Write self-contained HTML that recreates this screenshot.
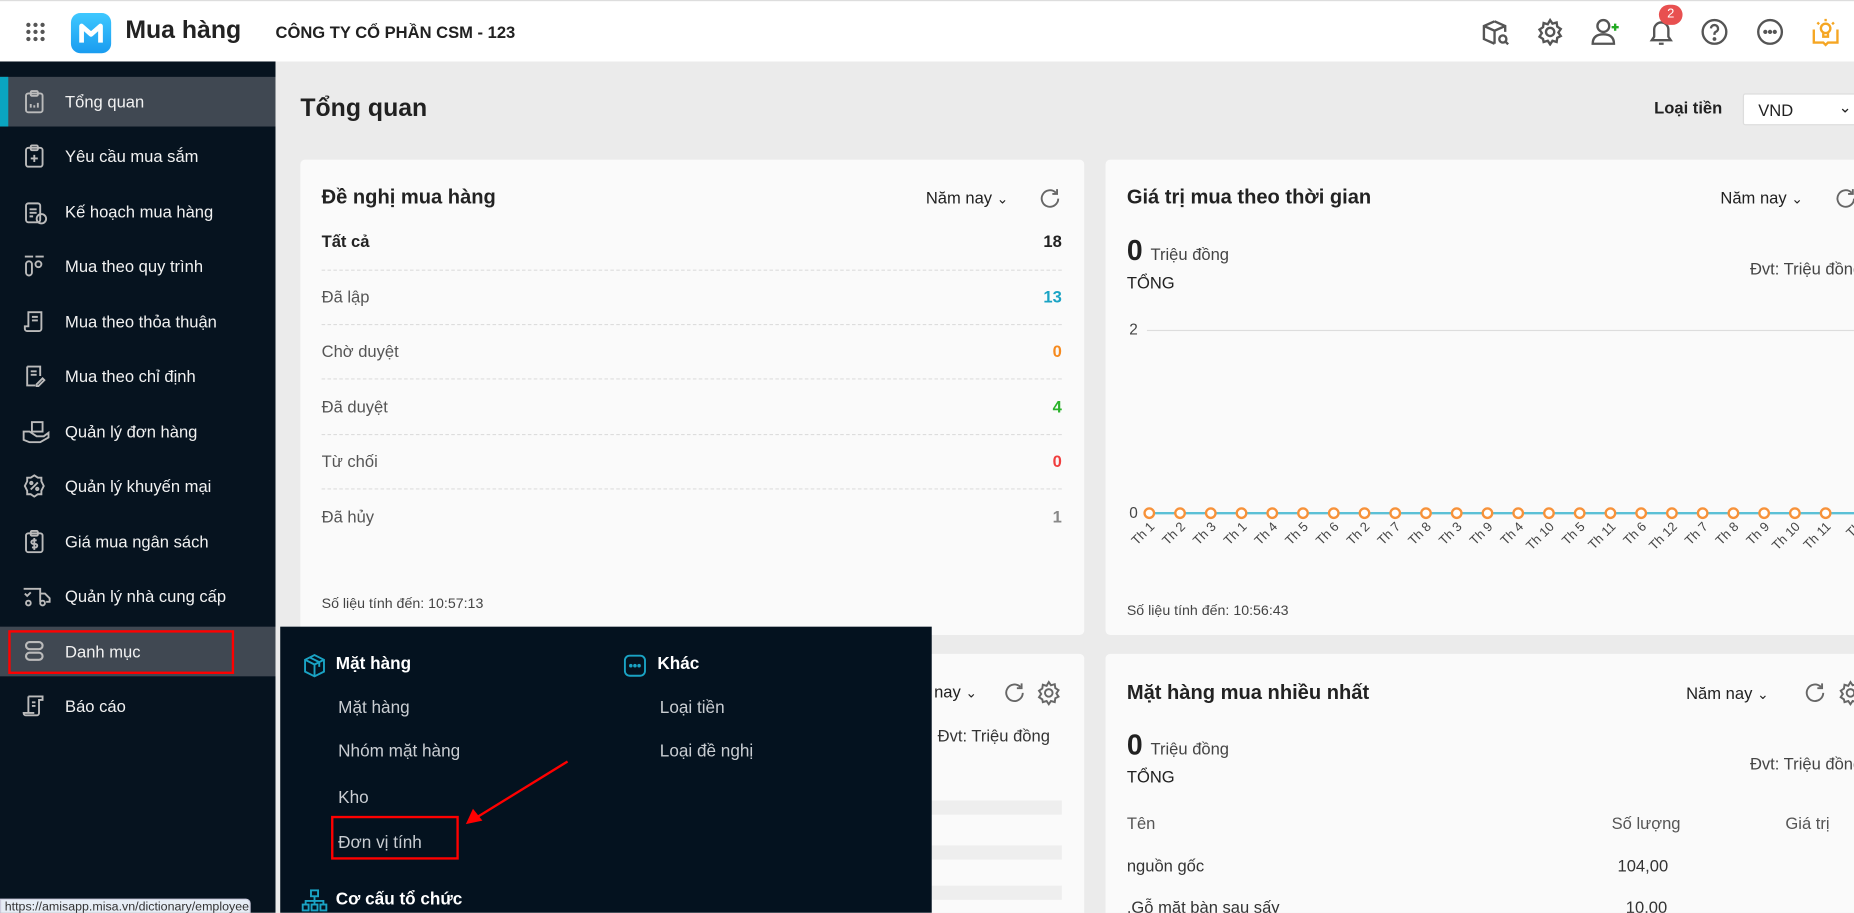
<!DOCTYPE html>
<html><head><meta charset="utf-8">
<style>
*{box-sizing:border-box;margin:0;padding:0}
html,body{width:1854px;height:913px;overflow:hidden;background:#ebebeb}
#w{position:absolute;left:0;top:0;width:1568px;height:772px;transform:scale(1.18240);transform-origin:0 0;font-family:"Liberation Sans",sans-serif;color:#212121;overflow:hidden;background:#ebebeb}
.a{position:absolute;white-space:nowrap}
.hdr{left:0;top:0;width:1568px;height:52px;background:#fff;border-top:1px solid #ddd}
.sb{left:0;top:52px;width:233px;height:720px;background:#06131f}
.si{position:absolute;left:0;width:233px;height:42px;color:#f2f2f2;font-size:14px;line-height:42px}
.si span{position:absolute;left:55px}
.si svg{position:absolute;left:19px;top:11px}
.card{background:#fafafa;border-radius:4px}
.row{position:absolute;left:272px;width:626px;font-size:14px;color:#555}
.row b{position:absolute;right:0;font-weight:bold}
.dash{position:absolute;left:272px;width:626px;border-top:1px dashed #ddd}
.dd{left:237px;top:530px;width:551px;height:242px;background:#04121f}
.mi{position:absolute;color:#c9cdd2;font-size:14.5px}
.mh{position:absolute;color:#fff;font-size:14.5px;font-weight:bold}
.ttl{font-size:17px;font-weight:bold;color:#222}
</style></head><body><div id="w">
<div class="a hdr"></div>
<svg class="a" style="left:21px;top:18px" width="18" height="18" viewBox="0 0 18 18" fill="#555"><circle cx="3" cy="3" r="1.8"/><circle cx="9" cy="3" r="1.8"/><circle cx="15" cy="3" r="1.8"/><circle cx="3" cy="9" r="1.8"/><circle cx="9" cy="9" r="1.8"/><circle cx="15" cy="9" r="1.8"/><circle cx="3" cy="15" r="1.8"/><circle cx="9" cy="15" r="1.8"/><circle cx="15" cy="15" r="1.8"/></svg>
<div class="a" style="left:60px;top:11px;width:34px;height:34px;border-radius:8px;background:linear-gradient(#3ec8ff,#1a9cf0)"></div>
<svg class="a" style="left:64px;top:17px" width="26" height="22" viewBox="0 0 26 22"><path d="M5 19V5l8 7 8-7v14" stroke="#fff" stroke-width="4" fill="none" stroke-linejoin="round"/></svg>
<div class="a" style="left:106px;top:14px;font-size:21px;font-weight:bold;color:#222">Mua hàng</div>
<div class="a" style="left:233px;top:19px;font-size:14px;font-weight:bold">CÔNG TY CỔ PHẦN CSM - 123</div>
<svg class="a" style="left:1252px;top:15px" width="26" height="26" viewBox="0 0 26 26" fill="none" stroke="#555" stroke-width="2"><path d="M12 3l9 4v5M12 3L3 7v11l9 4M3 7l9 4 9-4M12 11v11"/><circle cx="19" cy="18" r="3"/><path d="M21 20l2.5 2.5"/></svg>
<svg class="a" style="left:1299px;top:15px" width="24" height="24" viewBox="0 0 24 24" fill="none" stroke="#555" stroke-width="2"><circle cx="12" cy="12" r="3.5"/><path d="M12 2l2 3 3.5-1 .5 3.5 3 2-2 3 2 3-3 1.5-.5 3.5-3.5-1-2 3-2-3-3.5 1L6 18l-3-2 2-3-2-3 3-2 .5-3.5 3.5 1z"/></svg>
<svg class="a" style="left:1344px;top:14px" width="28" height="26" viewBox="0 0 28 26" fill="none" stroke="#555" stroke-width="2"><circle cx="12" cy="8" r="5"/><path d="M3 23c0-6 4-8 9-8s9 2 9 8z"/><path d="M22 6v6M19 9h6" stroke="#2a2"/></svg>
<svg class="a" style="left:1393px;top:15px" width="24" height="26" viewBox="0 0 24 26" fill="none" stroke="#555" stroke-width="2"><path d="M4 19h16l-2-3v-6a6 6 0 0 0-12 0v6z"/><path d="M10 22h4"/></svg>
<div class="a" style="left:1403px;top:4px;width:20px;height:17px;border-radius:9px;background:#e85050;color:#fff;font-size:11px;text-align:center;line-height:17px">2</div>
<svg class="a" style="left:1438px;top:15px" width="24" height="24" viewBox="0 0 24 24" fill="none" stroke="#555" stroke-width="2"><circle cx="12" cy="12" r="10"/><path d="M9 9a3 3 0 1 1 4 3c-1 .5-1 1-1 2.5"/><circle cx="12" cy="18" r=".6" fill="#555"/></svg>
<svg class="a" style="left:1485px;top:15px" width="24" height="24" viewBox="0 0 24 24" fill="none" stroke="#555" stroke-width="2"><circle cx="12" cy="12" r="10"/><circle cx="8" cy="12" r=".8" fill="#555"/><circle cx="12" cy="12" r=".8" fill="#555"/><circle cx="16" cy="12" r=".8" fill="#555"/></svg>
<svg class="a" style="left:1531px;top:13px" width="26" height="28" viewBox="0 0 26 28" fill="none" stroke="#f5a623" stroke-width="2"><circle cx="13" cy="11" r="4"/><path d="M11 15v3h4v-3M13 3v2M6 6l1.5 1.5M20 6l-1.5 1.5M3 12v11h8l2 2 2-2h8V12"/></svg>
<div class="a sb"></div>
<div class="si" style="top:65px;background:#404852"><div style="position:absolute;left:0;top:0;width:7px;height:42px;background:#0aa5c0"></div><svg width="20" height="20" viewBox="0 0 20 20" fill="none" stroke="#bbb" stroke-width="1.6"><rect x="3" y="3" width="14" height="16" rx="2"/><rect x="7" y="1" width="6" height="4" rx="1"/><path d="M7 15v-3M10 15v-2M13 15v-4"/></svg><span>Tổng quan</span></div>
<div class="si" style="top:111px"><svg width="20" height="20" viewBox="0 0 20 20" fill="none" stroke="#bbb" stroke-width="1.6"><rect x="3" y="3" width="14" height="16" rx="2"/><rect x="7" y="1" width="6" height="4" rx="1"/><path d="M10 9v6M7 12h6"/></svg><span>Yêu cầu mua sắm</span></div>
<div class="si" style="top:158px"><svg width="22" height="22" viewBox="0 0 22 22" fill="none" stroke="#bbb" stroke-width="1.6"><rect x="3" y="3" width="12" height="16" rx="2"/><path d="M6 8h6M6 11h6M6 14h3"/><circle cx="16" cy="16" r="4"/></svg><span>Kế hoạch mua hàng</span></div>
<div class="si" style="top:204px"><svg width="20" height="20" viewBox="0 0 20 20" fill="none" stroke="#bbb" stroke-width="1.6"><path d="M2 2h7M11 2h7"/><rect x="3" y="6" width="5" height="12" rx="2.5"/><rect x="11" y="6" width="5" height="5" rx="2.5"/></svg><span>Mua theo quy trình</span></div>
<div class="si" style="top:251px"><svg width="20" height="20" viewBox="0 0 20 20" fill="none" stroke="#bbb" stroke-width="1.6"><path d="M5 2h11v14a2 2 0 0 1-2 2H4a2 2 0 0 1-2-2v-2h3z"/><path d="M8 6h5M8 9h5"/></svg><span>Mua theo thỏa thuận</span></div>
<div class="si" style="top:297px"><svg width="20" height="20" viewBox="0 0 20 20" fill="none" stroke="#bbb" stroke-width="1.6"><path d="M4 2h11v8M4 2v16h7"/><path d="M7 6h5M7 9h5M12 17l5-5 1.5 1.5-5 5H12z"/></svg><span>Mua theo chỉ định</span></div>
<div class="si" style="top:344px"><svg width="24" height="20" viewBox="0 0 24 20" fill="none" stroke="#bbb" stroke-width="1.6"><rect x="8" y="2" width="9" height="8"/><path d="M1 10h5l6 4h6l4-3v4l-7 4H6l-5-2z"/></svg><span>Quản lý đơn hàng</span></div>
<div class="si" style="top:390px"><svg width="20" height="20" viewBox="0 0 20 20" fill="none" stroke="#bbb" stroke-width="1.6"><path d="M10 1l3 2h3v3l2 4-2 4v3h-3l-3 2-3-2H4v-3l-2-4 2-4V3h3z"/><path d="M7 13l6-6"/><circle cx="7.5" cy="7.5" r="1"/><circle cx="12.5" cy="12.5" r="1"/></svg><span>Quản lý khuyến mại</span></div>
<div class="si" style="top:437px"><svg width="20" height="20" viewBox="0 0 20 20" fill="none" stroke="#bbb" stroke-width="1.6"><rect x="3" y="3" width="14" height="16" rx="2"/><rect x="7" y="1" width="6" height="4" rx="1"/><path d="M12 9h-3a1.5 1.5 0 0 0 0 3h2a1.5 1.5 0 0 1 0 3H8M10 7v10"/></svg><span>Giá mua ngân sách</span></div>
<div class="si" style="top:483px"><svg width="24" height="20" viewBox="0 0 24 20" fill="none" stroke="#bbb" stroke-width="1.6"><path d="M1 4h14v11M15 8h4l4 4v3h-3"/><circle cx="5" cy="16" r="2"/><circle cx="17" cy="16" r="2"/><path d="M2 8l2 2 3-3"/></svg><span>Quản lý nhà cung cấp</span></div>
<div class="si" style="top:530px;background:#404852"><svg width="20" height="20" viewBox="0 0 20 20" fill="none" stroke="#bbb" stroke-width="1.8"><rect x="3" y="2" width="14" height="6" rx="3"/><rect x="3" y="11" width="14" height="6" rx="3"/></svg><span>Danh mục</span></div>
<div class="a" style="left:7px;top:533px;width:191px;height:37px;border:2px solid #f00"></div>
<div class="si" style="top:576px"><svg width="20" height="20" viewBox="0 0 20 20" fill="none" stroke="#bbb" stroke-width="1.6"><path d="M5 2h12v3h-3v11a2 2 0 0 1-2 2H3a2 2 0 0 1-2-2h9"/><path d="M5 2v14M8 7h3M8 10h3"/></svg><span>Báo cáo</span></div>
<div class="a" style="left:0;top:760px;width:212px;height:14px;background:#e6edf5;border:1px solid #ccd;border-radius:0 4px 0 0;font-size:10.5px;color:#333;padding-left:3px;line-height:12px;overflow:hidden">https://amisapp.misa.vn/dictionary/employee</div>
<div class="a" style="left:254px;top:80px;font-size:21px;font-weight:bold">Tổng quan</div>
<div class="a" style="left:1399px;top:83px;font-size:14px;font-weight:bold">Loại tiền</div>
<div class="a" style="left:1474px;top:79px;width:100px;height:27px;background:#fff;border:1px solid #ddd;border-radius:2px;font-size:14px;padding:5px 12px">VND<span style="position:absolute;left:80px;top:3px;font-size:13px">⌄</span></div>
<div class="a card" style="left:254px;top:135px;width:663px;height:402px"></div>
<div class="a ttl" style="left:272px;top:157px">Đề nghị mua hàng</div>
<div class="a" style="left:783px;top:159px;font-size:14px">Năm nay <span style="font-size:12px">⌄</span></div>
<svg class="a" style="left:878px;top:158px" width="20" height="20" viewBox="0 0 20 20" fill="none" stroke="#666" stroke-width="1.6"><path d="M17 10a7 7 0 1 1-2-5M16 2v4h-4"/></svg>
<div class="row" style="top:196px;color:#222;font-weight:bold">Tất cả<b>18</b></div>
<div class="dash" style="top:228px"></div>
<div class="row" style="top:243px">Đã lập<b style="color:#1aa3c4">13</b></div>
<div class="dash" style="top:274px"></div>
<div class="row" style="top:289px">Chờ duyệt<b style="color:#f68a1e">0</b></div>
<div class="dash" style="top:320px"></div>
<div class="row" style="top:336px">Đã duyệt<b style="color:#2bb32b">4</b></div>
<div class="dash" style="top:367px"></div>
<div class="row" style="top:382px">Từ chối<b style="color:#f03e3e">0</b></div>
<div class="dash" style="top:413px"></div>
<div class="row" style="top:429px">Đã hủy<b style="color:#888">1</b></div>
<div class="a" style="left:272px;top:503px;font-size:12px;color:#444">Số liệu tính đến: 10:57:13</div>
<div class="a card" style="left:935px;top:135px;width:640px;height:402px"></div>
<div class="a ttl" style="left:953px;top:157px">Giá trị mua theo thời gian</div>
<div class="a" style="left:1455px;top:159px;font-size:14px">Năm nay <span style="font-size:12px">⌄</span></div>
<svg class="a" style="left:1551px;top:158px" width="20" height="20" viewBox="0 0 20 20" fill="none" stroke="#666" stroke-width="1.6"><path d="M17 10a7 7 0 1 1-2-5M16 2v4h-4"/></svg>
<div class="a" style="left:953px;top:199px;font-size:24px;font-weight:bold">0 <span style="font-size:14px;font-weight:normal;color:#444">Triệu đồng</span></div>
<div class="a" style="left:953px;top:231px;font-size:14px">TỔNG</div>
<div class="a" style="left:1480px;top:219px;font-size:14px;color:#444">Đvt: Triệu đồng</div>
<div class="a" style="left:955px;top:271px;font-size:13px;color:#444">2</div>
<div class="a" style="left:970px;top:279px;width:600px;border-top:1px solid #ddd"></div>
<div class="a" style="left:955px;top:426px;font-size:13px;color:#444">0</div>
<svg class="a" style="left:935px;top:420px" width="640" height="60" viewBox="0 0 640 60">
<line x1="33" y1="14" x2="640" y2="14" stroke="#5bc0d6" stroke-width="2"/>
<g fill="#fff" stroke="#f7923a" stroke-width="2">
<circle cx="37" cy="14" r="4"/><circle cx="63" cy="14" r="4"/><circle cx="89" cy="14" r="4"/><circle cx="115" cy="14" r="4"/><circle cx="141" cy="14" r="4"/><circle cx="167" cy="14" r="4"/><circle cx="193" cy="14" r="4"/><circle cx="219" cy="14" r="4"/><circle cx="245" cy="14" r="4"/><circle cx="271" cy="14" r="4"/><circle cx="297" cy="14" r="4"/><circle cx="323" cy="14" r="4"/><circle cx="349" cy="14" r="4"/><circle cx="375" cy="14" r="4"/><circle cx="401" cy="14" r="4"/><circle cx="427" cy="14" r="4"/><circle cx="453" cy="14" r="4"/><circle cx="479" cy="14" r="4"/><circle cx="505" cy="14" r="4"/><circle cx="531" cy="14" r="4"/><circle cx="557" cy="14" r="4"/><circle cx="583" cy="14" r="4"/><circle cx="609" cy="14" r="4"/></g>
<g font-family="Liberation Sans" font-size="11" fill="#444" text-anchor="end">
<text transform="translate(42,26) rotate(-45)">Th 1</text><text transform="translate(68,26) rotate(-45)">Th 2</text><text transform="translate(94,26) rotate(-45)">Th 3</text><text transform="translate(120,26) rotate(-45)">Th 1</text><text transform="translate(146,26) rotate(-45)">Th 4</text><text transform="translate(172,26) rotate(-45)">Th 5</text><text transform="translate(198,26) rotate(-45)">Th 6</text><text transform="translate(224,26) rotate(-45)">Th 2</text><text transform="translate(250,26) rotate(-45)">Th 7</text><text transform="translate(276,26) rotate(-45)">Th 8</text><text transform="translate(302,26) rotate(-45)">Th 3</text><text transform="translate(328,26) rotate(-45)">Th 9</text><text transform="translate(354,26) rotate(-45)">Th 4</text><text transform="translate(380,26) rotate(-45)">Th 10</text><text transform="translate(406,26) rotate(-45)">Th 5</text><text transform="translate(432,26) rotate(-45)">Th 11</text><text transform="translate(458,26) rotate(-45)">Th 6</text><text transform="translate(484,26) rotate(-45)">Th 12</text><text transform="translate(510,26) rotate(-45)">Th 7</text><text transform="translate(536,26) rotate(-45)">Th 8</text><text transform="translate(562,26) rotate(-45)">Th 9</text><text transform="translate(588,26) rotate(-45)">Th 10</text><text transform="translate(614,26) rotate(-45)">Th 11</text><text transform="translate(640,26) rotate(-45)">Th</text></g></svg>
<div class="a" style="left:953px;top:509px;font-size:12px;color:#444">Số liệu tính đến: 10:56:43</div>
<div class="a card" style="left:254px;top:553px;width:663px;height:230px"></div>
<div class="a" style="left:790px;top:577px;font-size:14px">nay <span style="font-size:12px">⌄</span></div>
<svg class="a" style="left:848px;top:576px" width="20" height="20" viewBox="0 0 20 20" fill="none" stroke="#666" stroke-width="1.6"><path d="M17 10a7 7 0 1 1-2-5M16 2v4h-4"/></svg>
<svg class="a" style="left:876px;top:575px" width="22" height="22" viewBox="0 0 24 24" fill="none" stroke="#666" stroke-width="1.8"><circle cx="12" cy="12" r="3.5"/><path d="M12 2l2 3 3.5-1 .5 3.5 3 2-2 3 2 3-3 1.5-.5 3.5-3.5-1-2 3-2-3-3.5 1L6 18l-3-2 2-3-2-3 3-2 .5-3.5 3.5 1z"/></svg>
<div class="a" style="left:793px;top:614px;font-size:14px;color:#333">Đvt: Triệu đồng</div>
<div class="a" style="left:788px;top:677px;width:110px;height:12px;background:#eee"></div>
<div class="a" style="left:788px;top:715px;width:110px;height:12px;background:#eee"></div>
<div class="a" style="left:788px;top:749px;width:110px;height:12px;background:#eee"></div>
<div class="a card" style="left:935px;top:553px;width:640px;height:230px"></div>
<div class="a ttl" style="left:953px;top:576px">Mặt hàng mua nhiều nhất</div>
<div class="a" style="left:1426px;top:578px;font-size:14px">Năm nay <span style="font-size:12px">⌄</span></div>
<svg class="a" style="left:1525px;top:576px" width="20" height="20" viewBox="0 0 20 20" fill="none" stroke="#666" stroke-width="1.6"><path d="M17 10a7 7 0 1 1-2-5M16 2v4h-4"/></svg>
<svg class="a" style="left:1554px;top:575px" width="22" height="22" viewBox="0 0 24 24" fill="none" stroke="#666" stroke-width="1.8"><circle cx="12" cy="12" r="3.5"/><path d="M12 2l2 3 3.5-1 .5 3.5 3 2-2 3 2 3-3 1.5-.5 3.5-3.5-1-2 3-2-3-3.5 1L6 18l-3-2 2-3-2-3 3-2 .5-3.5 3.5 1z"/></svg>
<div class="a" style="left:953px;top:617px;font-size:24px;font-weight:bold">0 <span style="font-size:14px;font-weight:normal;color:#444">Triệu đồng</span></div>
<div class="a" style="left:953px;top:649px;font-size:14px">TỔNG</div>
<div class="a" style="left:1480px;top:638px;font-size:14px;color:#444">Đvt: Triệu đồng</div>
<div class="a" style="left:953px;top:688px;font-size:14px;color:#555">Tên</div>
<div class="a" style="left:1363px;top:688px;font-size:14px;color:#555">Số lượng</div>
<div class="a" style="left:1510px;top:688px;font-size:14px;color:#555">Giá trị</div>
<div class="a" style="left:953px;top:724px;font-size:14px;color:#333">nguồn gốc</div>
<div class="a" style="left:1368px;top:724px;font-size:14px;color:#333">104,00</div>
<div class="a" style="left:953px;top:759px;font-size:14px;color:#333">.Gỗ mặt bàn sau sấy</div>
<div class="a" style="left:1375px;top:759px;font-size:14px;color:#333">10,00</div>
<div class="a dd"></div>
<svg class="a" style="left:256px;top:553px" width="20" height="20" viewBox="0 0 20 20" fill="none" stroke="#1aa3c4" stroke-width="1.6"><path d="M10 1l8 4v10l-8 4-8-4V5z"/><path d="M2 5l8 4 8-4M10 9v10M6 3l8 4v4"/></svg>
<div class="mh" style="left:284px;top:554px">Mặt hàng</div>
<svg class="a" style="left:527px;top:553px" width="20" height="20" viewBox="0 0 20 20" fill="none" stroke="#1aa3c4" stroke-width="1.6"><rect x="1.5" y="1.5" width="17" height="17" rx="4"/><circle cx="6.5" cy="10" r=".7" fill="#1aa3c4"/><circle cx="10" cy="10" r=".7" fill="#1aa3c4"/><circle cx="13.5" cy="10" r=".7" fill="#1aa3c4"/></svg>
<div class="mh" style="left:556px;top:554px">Khác</div>
<div class="mi" style="left:286px;top:591px">Mặt hàng</div>
<div class="mi" style="left:286px;top:628px">Nhóm mặt hàng</div>
<div class="mi" style="left:286px;top:667px">Kho</div>
<div class="mi" style="left:286px;top:705px">Đơn vị tính</div>
<div class="mi" style="left:558px;top:591px">Loại tiền</div>
<div class="mi" style="left:558px;top:628px">Loại đề nghị</div>
<div class="a" style="left:280px;top:690px;width:108px;height:37px;border:2px solid #f00"></div>
<svg class="a" style="left:384px;top:640px" width="100" height="62" viewBox="0 0 100 62"><path d="M96 4L18 52" stroke="#f00" stroke-width="2"/><path d="M10 57l6-13 8 10z" fill="#f00"/></svg>
<svg class="a" style="left:255px;top:752px" width="22" height="20" viewBox="0 0 22 20" fill="none" stroke="#1aa3c4" stroke-width="1.6"><rect x="8" y="1" width="6" height="5"/><rect x="1" y="13" width="5" height="5"/><rect x="8.5" y="13" width="5" height="5"/><rect x="16" y="13" width="5" height="5"/><path d="M11 6v7M3.5 13v-3h15v3"/></svg>
<div class="mh" style="left:284px;top:753px">Cơ cấu tổ chức</div>
</div></body></html>
